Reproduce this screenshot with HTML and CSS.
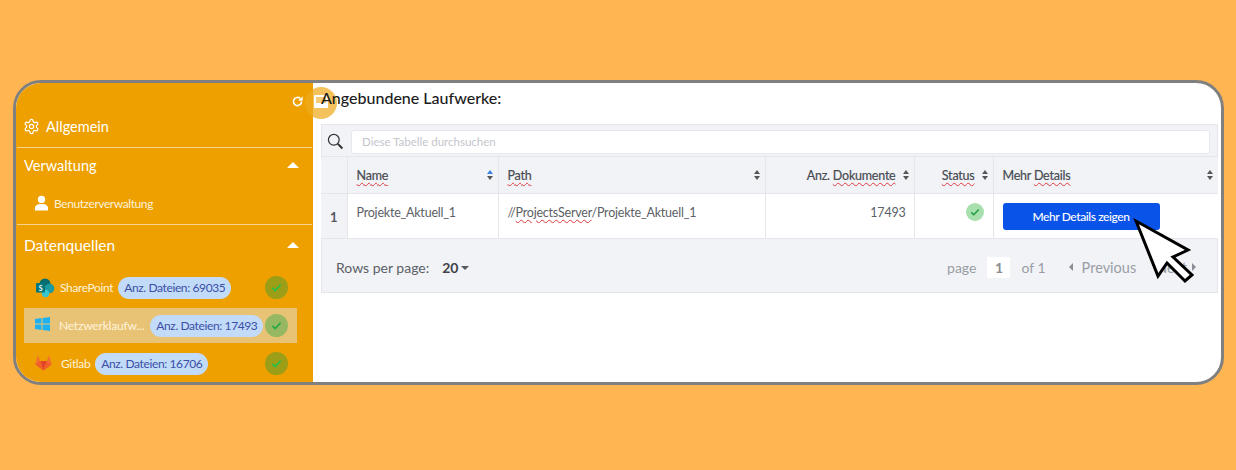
FILE: index.html
```html
<!DOCTYPE html>
<html lang="de">
<head>
<meta charset="utf-8">
<title>Angebundene Laufwerke</title>
<link rel="stylesheet" href="styles.css">
</head>
<body>
<div class="window">
  <aside class="sidebar">
    <div class="refresh-row">
      <svg class="refresh" viewBox="0 0 24 24" width="13" height="13"><path d="M19.500 12a7.500 7.500 0 1 1-2.400-5.500" fill="none" stroke="#fff" stroke-width="3"/><path d="M21.500 2.500v8h-8z" fill="#fff"/></svg>
    </div>
    <div class="nav-head general">
      <svg viewBox="0 0 24 24" width="17" height="17" fill="none" stroke="#fff" stroke-width="1.700" stroke-linejoin="round"><path d="M12.220 2h-.44a2 2 0 0 0-2 2v.18a2 2 0 0 1-1 1.730l-.43.25a2 2 0 0 1-2 0l-.15-.08a2 2 0 0 0-2.730.73l-.22.38a2 2 0 0 0 .73 2.730l.15.1a2 2 0 0 1 1 1.720v.51a2 2 0 0 1-1 1.740l-.15.09a2 2 0 0 0-.73 2.730l.22.38a2 2 0 0 0 2.730.73l.15-.08a2 2 0 0 1 2 0l.43.25a2 2 0 0 1 1 1.730V20a2 2 0 0 0 2 2h.44a2 2 0 0 0 2-2v-.18a2 2 0 0 1 1-1.730l.43-.25a2 2 0 0 1 2 0l.15.08a2 2 0 0 0 2.730-.73l.22-.39a2 2 0 0 0-.73-2.730l-.15-.08a2 2 0 0 1-1-1.740v-.5a2 2 0 0 1 1-1.740l.15-.09a2 2 0 0 0 .73-2.730l-.22-.38a2 2 0 0 0-2.730-.73l-.15.08a2 2 0 0 1-2 0l-.43-.25a2 2 0 0 1-1-1.730V4a2 2 0 0 0-2-2z"/><circle cx="12" cy="12" r="3"/></svg>
      <span>Allgemein</span>
    </div>
    <div class="nav-head section first">
      <span>Verwaltung</span><i class="caret"></i>
    </div>
    <div class="user-row">
      <svg viewBox="0 0 16 16" width="15" height="16" fill="#fff"><circle cx="8" cy="4.200" r="3.900"/><path d="M1 16v-2.600C1 10.500 3.800 9 8 9s7 1.500 7 4.400V16z"/></svg>
      <span>Benutzerverwaltung</span>
    </div>
    <div class="nav-head section big">
      <span>Datenquellen</span><i class="caret"></i>
    </div>
    <div class="sources">
      <div class="source">
        <svg class="src-icon" viewBox="0 0 20 20" width="20" height="20"><circle cx="10" cy="6" r="5.500" fill="#036c70"/><circle cx="14.500" cy="10.500" r="4.800" fill="#1a9ba1"/><circle cx="10.500" cy="15.500" r="3.700" fill="#37c6d0"/><rect x="1" y="5" width="9" height="9.500" rx="1" fill="#03787c"/><text x="5.500" y="12.500" class="sp-s">S</text></svg>
        <span class="src-name sp">SharePoint</span>
        <span class="pill">Anz. Dateien: 69035</span>
        <span class="ok"><svg viewBox="0 0 12 12" width="11" height="11"><path d="M1.500 6.500 4.500 9.300 10.500 3" fill="none" stroke="#22c04a" stroke-width="1.800"/></svg></span>
      </div>
      <div class="source active">
        <svg class="src-icon win" viewBox="0 0 15 14" width="15" height="14" fill="#1eb1f0"><path d="M0 2 6.500 1v5.500H0zM7.500 .9 15 0v6.500H7.500zM0 7.500h6.500V13L0 12zM7.500 7.500H15V14l-7.500-1z"/></svg>
        <span class="src-name net">Netzwerklaufw...</span>
        <span class="pill">Anz. Dateien: 17493</span>
        <span class="ok"><svg viewBox="0 0 12 12" width="11" height="11"><path d="M1.500 6.500 4.500 9.300 10.500 3" fill="none" stroke="#22a844" stroke-width="1.800"/></svg></span>
      </div>
      <div class="source">
        <svg class="src-icon lab" viewBox="0 0 18 17" width="17" height="17"><path d="M9 17 .3 10.500 3 .5l2.500 6.500z" fill="#f4702c"/><path d="M9 17 17.700 10.500 15 .5l-2.500 6.500z" fill="#f4702c"/><path d="M9 17 5.500 7h7z" fill="#e24329"/><path d="M9 17 .3 10.500 5.500 7z" fill="#f0602a"/><path d="M9 17 17.700 10.500 12.500 7z" fill="#f0602a"/></svg>
        <span class="src-name git">Gitlab</span>
        <span class="pill">Anz. Dateien: 16706</span>
        <span class="ok"><svg viewBox="0 0 12 12" width="11" height="11"><path d="M1.500 6.500 4.500 9.300 10.500 3" fill="none" stroke="#22c04a" stroke-width="1.800"/></svg></span>
      </div>
    </div>
  </aside>
  <main class="content">
    <h1 class="title">Angebundene Laufwerke:</h1>
    <section class="panel">
      <div class="search-row">
        <svg viewBox="0 0 18 18" width="17" height="17" fill="none"><circle cx="7.200" cy="7.200" r="5.700" stroke="#333" stroke-width="1.300"/><path d="M11.500 11.500 16.300 16.300" stroke="#333" stroke-width="2.200"/></svg>
        <div class="search-box">Diese Tabelle durchsuchen</div>
      </div>
      <table class="grid">
        <colgroup>
          <col class="c-idx"><col class="c-name"><col class="c-path"><col class="c-docs"><col class="c-status"><col class="c-more">
        </colgroup>
        <thead>
          <tr>
            <th></th>
            <th><div class="th-in"><span class="th-label"><u>Name</u></span><span class="sort asc"></span></div></th>
            <th><div class="th-in"><span class="th-label"><u>Path</u></span><span class="sort"></span></div></th>
            <th><div class="th-in right"><span class="th-label">Anz. <u>Dokumente</u></span><span class="sort"></span></div></th>
            <th><div class="th-in right"><span class="th-label"><u>Status</u></span><span class="sort"></span></div></th>
            <th><div class="th-in"><span class="th-label">Mehr <u>Details</u></span><span class="sort"></span></div></th>
          </tr>
        </thead>
        <tbody>
          <tr>
            <td class="idx">1</td>
            <td>Projekte_Aktuell_1</td>
            <td>//<u>ProjectsServer</u>/Projekte_Aktuell_1</td>
            <td class="num">17493</td>
            <td class="state"><span class="ok-small"><svg viewBox="0 0 12 12" width="10" height="10"><path d="M1.500 6.500 4.500 9.300 10.500 3" fill="none" stroke="#1f9e3f" stroke-width="1.800"/></svg></span></td>
            <td class="btn-cell"><button class="details">Mehr Details zeigen</button></td>
          </tr>
        </tbody>
      </table>
      <div class="pager">
        <div class="rows">Rows per page:<b>20</b><i class="drop"></i></div>
        <div class="pages">
          <span>page</span><span class="page-no">1</span><span>of 1</span>
          <i class="tri-l"></i><span class="nav-txt">Previous</span><span class="nav-txt next">Next</span><i class="tri-r"></i>
        </div>
      </div>
    </section>
  </main>
  <div class="dot"><span></span></div>
  <svg class="cursor" viewBox="0 0 70 72" width="70" height="72"><path d="M6 6 28 61 37 48 55 66 62 60 43 42 58 35z" fill="#fff" stroke="#000" stroke-width="3" stroke-linejoin="miter"/></svg>
</div>
</body>
</html>
```
FILE: styles.css
```css
* { box-sizing: border-box; }
html, body { margin: 0; height: 100%; }
body {
  background: #ffb552;
  padding: 80px 12px 85px 13px;
  font-family: Lato, "Open Sans", sans-serif;
  overflow: hidden;
}
.window {
  position: relative;
  height: 305px;
  border: 3px solid #808080;
  border-radius: 28px;
  background: #fff;
  display: flex;
  overflow: hidden;
}
.sidebar {
  width: 297px;
  flex: none;
  background: #eda000;
  color: #fff;
  padding: 0 1px;
}
.refresh-row { height: 30px; display: flex; justify-content: flex-end; align-items: flex-end; padding: 0 8px 5px 0; }
.nav-head { display: flex; align-items: center; font-size: 14.500px; }
.general { height: 35px; padding: 0 0 8px 6px; gap: 6px; border-bottom: 1px solid #f8d48d; }
.section { height: 41px; padding: 0 13px 2px 7px; justify-content: space-between; }
.first { height: 36px; padding-bottom: 2px; }
.big { font-size: 15.500px; }
.caret { width: 0; height: 0; border-left: 6px solid transparent; border-right: 6px solid transparent; border-bottom: 6px solid #fff; }
.user-row { height: 41px; padding: 0 0 2px 17px; display: flex; align-items: center; gap: 5px; font-size: 12px; letter-spacing: -.42px; color: #fdf0d8; border-bottom: 1px solid #f8d48d; }
.sources { padding: 4px 0 0 7px; width: 280px; }
.source { height: 35px; margin-bottom: 3px; display: flex; align-items: center; position: relative; font-size: 12px; letter-spacing: -.36px; color: #fff3dc; }
.source.active { background: #e8c375; }
.src-icon { flex: none; margin-left: 11px; }
.win, .lab { margin-top: -3px; }
.src-name { margin-left: 9px; }
.sp { margin-left: 5px; }
.net { letter-spacing: -.2px; margin-left: 9px; }
.sp-s { font: bold 7px Lato, sans-serif; fill: #fff; text-anchor: middle; }
.pill { margin-left: 5px; height: 22px; padding: 0 6px; border-radius: 11px; background: #c2dbf9; color: #3a4fa5; font-size: 12px; letter-spacing: -.38px; line-height: 22px; white-space: nowrap; }
.net + .pill { margin-left: 6px; }
.ok { position: absolute; right: 9px; top: 6px; width: 23px; height: 23px; border-radius: 50%; background: #9c9e17; display: flex; align-items: center; justify-content: center; }
.active .ok { background: #97b862; }
.content { flex: 1; min-width: 0; padding: 0 5px 0 8px; }
.title { position: relative; z-index: 1; margin: 0; height: 41px; padding-top: 5px; font-size: 16px; line-height: 20px; font-weight: 500; color: #1b1b1b; }
.panel { width: 897px; height: 169px; background: #f1f3f7; border: 1px solid #e4e6ec; color: #55585f; }
.search-row { height: 31px; padding: 2px 7px 0 5px; display: flex; align-items: center; gap: 7px; }
.search-box { flex: 1; height: 24px; background: #fff; border: 1px solid #e6e8ee; border-radius: 3px; padding-left: 10px; font-size: 11.500px; line-height: 22px; color: #c3c6cc; }
.grid { width: 897px; margin-left: -1px; border-collapse: collapse; table-layout: fixed; font-size: 12.500px; letter-spacing: -.22px; }
.c-idx { width: 26px; } .c-name { width: 151px; } .c-path { width: 267px; } .c-docs { width: 149px; } .c-status { width: 79px; } .c-more { width: 225px; }
th { height: 37px; padding: 0; background: #f1f3f7; border: 1px solid #e4e6ec; font-weight: 400; }
th:first-child, td:first-child { border-left: 0; }
th:last-child, td:last-child { border-right: 0; }
.th-in { display: flex; align-items: center; justify-content: space-between; padding: 0 5px 0 9px; color: #484b52; -webkit-text-stroke: .2px #484b52; }
.th-in.right { justify-content: flex-end; gap: 7px; }
u { text-decoration: underline wavy #e0393e 1px; text-underline-offset: 2px; }
.sort { width: 6px; height: 10px; flex: none; position: relative; }
.sort::before, .sort::after { content: ""; position: absolute; left: 0; border-left: 3px solid transparent; border-right: 3px solid transparent; }
.sort::before { top: 0; border-bottom: 4px solid #555; }
.sort::after { bottom: 0; border-top: 4px solid #555; }
.sort.asc::before { border-bottom-color: #3b82e6; }
td { height: 45px; padding: 0 9px 8px; background: #fff; border: 1px solid #e4e6ec; vertical-align: middle; color: #5c5f66; }
td.idx { padding: 1px 0 0; text-align: center; background: #f1f3f7; font-weight: 700; font-size: 13px; color: #55585f; }
td.num { text-align: right; padding-right: 8px; }
td.state { text-align: right; padding-right: 9px; }
.ok-small { display: inline-flex; width: 18px; height: 18px; border-radius: 50%; background: #a8dfae; align-items: center; justify-content: center; vertical-align: middle; }
td.btn-cell { padding: 0 0 0 9px; }
.details { display: block; width: 157px; height: 27px; border: 0; border-radius: 3px; background: #0a53e8; color: #fff; font: 500 12px Lato, sans-serif; letter-spacing: -.4px; padding: 0; }
.pager { height: 53px; display: flex; align-items: center; justify-content: space-between; padding: 3px 21px 0 14px; }
.rows { font-size: 14px; color: #5c5f66; display: flex; align-items: center; }
.rows b { margin-left: 13px; color: #3f4249; font-size: 14px; }
.drop { margin-left: 3px; margin-top: 1px; width: 0; height: 0; border-left: 4px solid transparent; border-right: 4px solid transparent; border-top: 4px solid #55585f; }
.pages { display: flex; align-items: center; font-size: 14px; color: #9a9da4; }
.page-no { width: 23px; height: 21px; margin: 0 11px; background: #fff; text-align: center; line-height: 21px; font-weight: 700; color: #8a8d93; }
.tri-l { margin-left: 23px; width: 0; height: 0; border-top: 4px solid transparent; border-bottom: 4px solid transparent; border-right: 4px solid #8a8d93; }
.nav-txt { margin-left: 9px; font-size: 14.500px; }
.next { margin-left: 20px; }
.tri-r { margin-left: 5px; width: 0; height: 0; border-top: 4px solid transparent; border-bottom: 4px solid transparent; border-left: 4px solid #8a8d93; }
.dot { position: absolute; left: 289px; top: 4px; width: 32px; height: 32px; border-radius: 50%; background: rgba(238, 170, 30, .72); display: flex; align-items: center; justify-content: center; }
.dot span { width: 14px; height: 13px; margin-top: -3px; border: 2px solid #fff; border-bottom-width: 5px; border-radius: 1px; background: rgba(255,255,255,.15); }
.cursor { position: absolute; left: 1114px; top: 132px; }
```
